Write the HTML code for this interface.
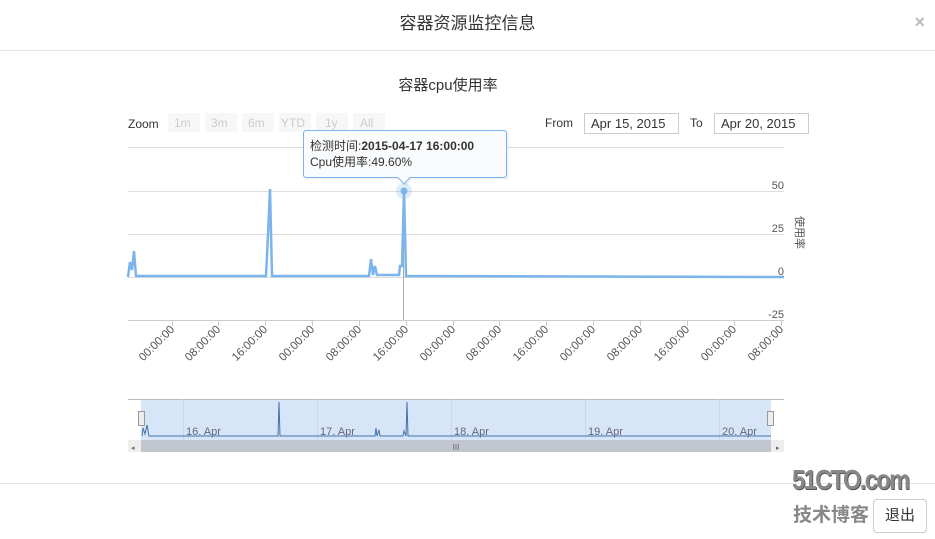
<!DOCTYPE html>
<html><head><meta charset="utf-8"><style>
body{margin:0;width:935px;height:539px;background:#fff;font-family:"Liberation Sans","Noto Sans CJK SC",sans-serif;overflow:hidden;position:relative}
.hdr{position:absolute;left:0;top:0;width:935px;height:50px;border-bottom:1px solid #e5e5e5;text-align:center;line-height:48px;font-size:17px;color:#333}
.x{position:absolute;right:10px;top:12px;font-size:18px;color:#bbb;font-weight:bold}
.foot{position:absolute;left:0;top:483px;width:935px;border-top:1px solid #e5e5e5}
.btn{position:absolute;left:873px;top:499px;width:52px;height:32px;border:1px solid #ccc;border-radius:4px;font-size:15px;text-align:center;line-height:32px;color:#333}
.wm{position:absolute;left:792px;top:464px;font-size:28px;font-weight:bold;color:#888;letter-spacing:-2px;text-shadow:1px 1px 0 #555;transform:scaleX(0.85);transform-origin:left}
.wm2{position:absolute;left:793px;top:500px;font-size:19px;font-weight:bold;color:#888}
</style></head><body>
<div class="hdr">容器资源监控信息</div><div class="x">×</div>
<svg width="935" height="539" style="position:absolute;left:0;top:0" font-family="Liberation Sans, Noto Sans CJK SC, sans-serif">
<text x="448" y="90" font-size="15" fill="#333" text-anchor="middle">容器cpu使用率</text>
<text x="128" y="128" font-size="12" fill="#333">Zoom</text>
<g font-size="12" fill="#ccc">
<rect x="168" y="113" width="32" height="19" fill="#f7f7f7"/><text x="174" y="127">1m</text>
<rect x="205" y="113" width="32" height="19" fill="#f7f7f7"/><text x="211" y="127">3m</text>
<rect x="242" y="113" width="32" height="19" fill="#f7f7f7"/><text x="248" y="127">6m</text>
<rect x="279" y="113" width="32" height="19" fill="#f7f7f7"/><text x="281" y="127">YTD</text>
<rect x="316" y="113" width="32" height="19" fill="#f7f7f7"/><text x="325" y="127">1y</text>
<rect x="353" y="113" width="32" height="19" fill="#f7f7f7"/><text x="360" y="127">All</text>
</g>
<text x="545" y="127" font-size="12" fill="#333">From</text>
<rect x="584.5" y="113.5" width="94" height="20" fill="#fff" stroke="#ccc"/>
<text x="591" y="128" font-size="13" fill="#333">Apr 15, 2015</text>
<text x="690" y="127" font-size="12" fill="#333">To</text>
<rect x="714.5" y="113.5" width="94" height="20" fill="#fff" stroke="#ccc"/>
<text x="721" y="128" font-size="13" fill="#333">Apr 20, 2015</text>
<g stroke="#ddd" stroke-width="1">
<line x1="128" y1="147.5" x2="784" y2="147.5"/><line x1="128" y1="191.5" x2="784" y2="191.5"/>
<line x1="128" y1="234.5" x2="784" y2="234.5"/><line x1="128" y1="277.5" x2="784" y2="277.5"/>
<line x1="128" y1="320.5" x2="784" y2="320.5" stroke="#ccc"/>
</g>
<g font-size="11" fill="#555" text-anchor="end">
<text x="784" y="189">50</text><text x="784" y="232">25</text><text x="784" y="275">0</text><text x="784" y="318">-25</text>
</g>
<text x="796" y="216" font-size="11" fill="#555" transform="rotate(90 796 216)">使用率</text>
<line x1="403.5" y1="191" x2="403.5" y2="320" stroke="#aaa"/>
<polyline fill="none" stroke="#7cb5ec" stroke-width="2.5" points="128,277 130,262 132,270 134,251 136,276 266,276 268,235 270,189 272,276 369,276 371,259 373,275 375,266 377,275 399,275 400,266 402,266 404,191 406,276 784,277"/>
<circle cx="404" cy="191" r="8" fill="#7cb5ec" opacity="0.25"/><circle cx="404" cy="191" r="3.5" fill="#7cb5ec"/>
<g stroke="#ccc"><line x1="172.5" y1="320" x2="172.5" y2="326"/><line x1="218.5" y1="320" x2="218.5" y2="326"/><line x1="265.5" y1="320" x2="265.5" y2="326"/><line x1="312.5" y1="320" x2="312.5" y2="326"/><line x1="359.5" y1="320" x2="359.5" y2="326"/><line x1="406.5" y1="320" x2="406.5" y2="326"/><line x1="453.5" y1="320" x2="453.5" y2="326"/><line x1="499.5" y1="320" x2="499.5" y2="326"/><line x1="546.5" y1="320" x2="546.5" y2="326"/><line x1="593.5" y1="320" x2="593.5" y2="326"/><line x1="640.5" y1="320" x2="640.5" y2="326"/><line x1="687.5" y1="320" x2="687.5" y2="326"/><line x1="734.5" y1="320" x2="734.5" y2="326"/><line x1="781.5" y1="320" x2="781.5" y2="326"/></g>
<g font-size="11.5" fill="#555" text-anchor="end">
<text transform="translate(175,330) rotate(-45)">00:00:00</text>
<text transform="translate(221,330) rotate(-45)">08:00:00</text>
<text transform="translate(268,330) rotate(-45)">16:00:00</text>
<text transform="translate(315,330) rotate(-45)">00:00:00</text>
<text transform="translate(362,330) rotate(-45)">08:00:00</text>
<text transform="translate(409,330) rotate(-45)">16:00:00</text>
<text transform="translate(456,330) rotate(-45)">00:00:00</text>
<text transform="translate(502,330) rotate(-45)">08:00:00</text>
<text transform="translate(549,330) rotate(-45)">16:00:00</text>
<text transform="translate(596,330) rotate(-45)">00:00:00</text>
<text transform="translate(643,330) rotate(-45)">08:00:00</text>
<text transform="translate(690,330) rotate(-45)">16:00:00</text>
<text transform="translate(737,330) rotate(-45)">00:00:00</text>
<text transform="translate(784,330) rotate(-45)">08:00:00</text>
</g>
<rect x="128" y="399" width="656" height="41" fill="#fff"/>
<rect x="141" y="399" width="630" height="41" fill="#d6e6f8"/>
<line x1="128" y1="399.5" x2="784" y2="399.5" stroke="#bbb"/>
<g stroke="#c8d8ec"><line x1="183.5" y1="399" x2="183.5" y2="440"/><line x1="317.5" y1="399" x2="317.5" y2="440"/><line x1="451.5" y1="399" x2="451.5" y2="440"/><line x1="585.5" y1="399" x2="585.5" y2="440"/><line x1="719.5" y1="399" x2="719.5" y2="440"/></g>
<g font-size="11" fill="#667"><text x="186" y="435">16. Apr</text><text x="320" y="435">17. Apr</text><text x="454" y="435">18. Apr</text><text x="588" y="435">19. Apr</text><text x="722" y="435">20. Apr</text></g>
<polyline fill="none" stroke="#4572a7" stroke-width="1" points="142,436 143,428 145,434 147,425 149,436 278,436 279,402 280,436 375,436 376,428 377,436 379,430 380,436 403,436 404,431 406,436 407,402 408,436 771,436"/>
<rect x="138.5" y="411.5" width="6" height="14" fill="#eee" stroke="#999"/>
<rect x="767.5" y="411.5" width="6" height="14" fill="#eee" stroke="#999"/>
<rect x="128" y="440" width="656" height="12" fill="#eee"/>
<rect x="141" y="440" width="630" height="12" fill="#c1c6cf"/>
<text x="456" y="450" font-size="8" fill="#666" text-anchor="middle">III</text>
<text x="131" y="450" font-size="7" fill="#666">◂</text><text x="776" y="450" font-size="7" fill="#666">▸</text>
<path d="M306.5 179.5 H509.5 V180.5 Z" fill="none"/>
<path d="M305.5 132.5 H508.5 V179.5 H412 L406 186 L400 179.5 H305.5 Z" fill="#000" opacity="0.06"/>
<path d="M306.5 130.5 H503.5 Q506.5 130.5 506.5 133.5 V174.5 Q506.5 177.5 503.5 177.5 H410 L404 184 L398 177.5 H306.5 Q303.5 177.5 303.5 174.5 V133.5 Q303.5 130.5 306.5 130.5 Z" fill="#f9fbfd" stroke="#7cb5ec"/>
<text x="310" y="150" font-size="12" fill="#333">检测时间:<tspan font-weight="bold">2015-04-17 16:00:00</tspan></text>
<text x="310" y="166" font-size="12" fill="#333">Cpu使用率:49.60%</text>
</svg>
<div class="foot"></div>
<div class="btn">退出</div>
<div class="wm">51CTO.com</div>
<div class="wm2">技术博客</div>
</body></html>
